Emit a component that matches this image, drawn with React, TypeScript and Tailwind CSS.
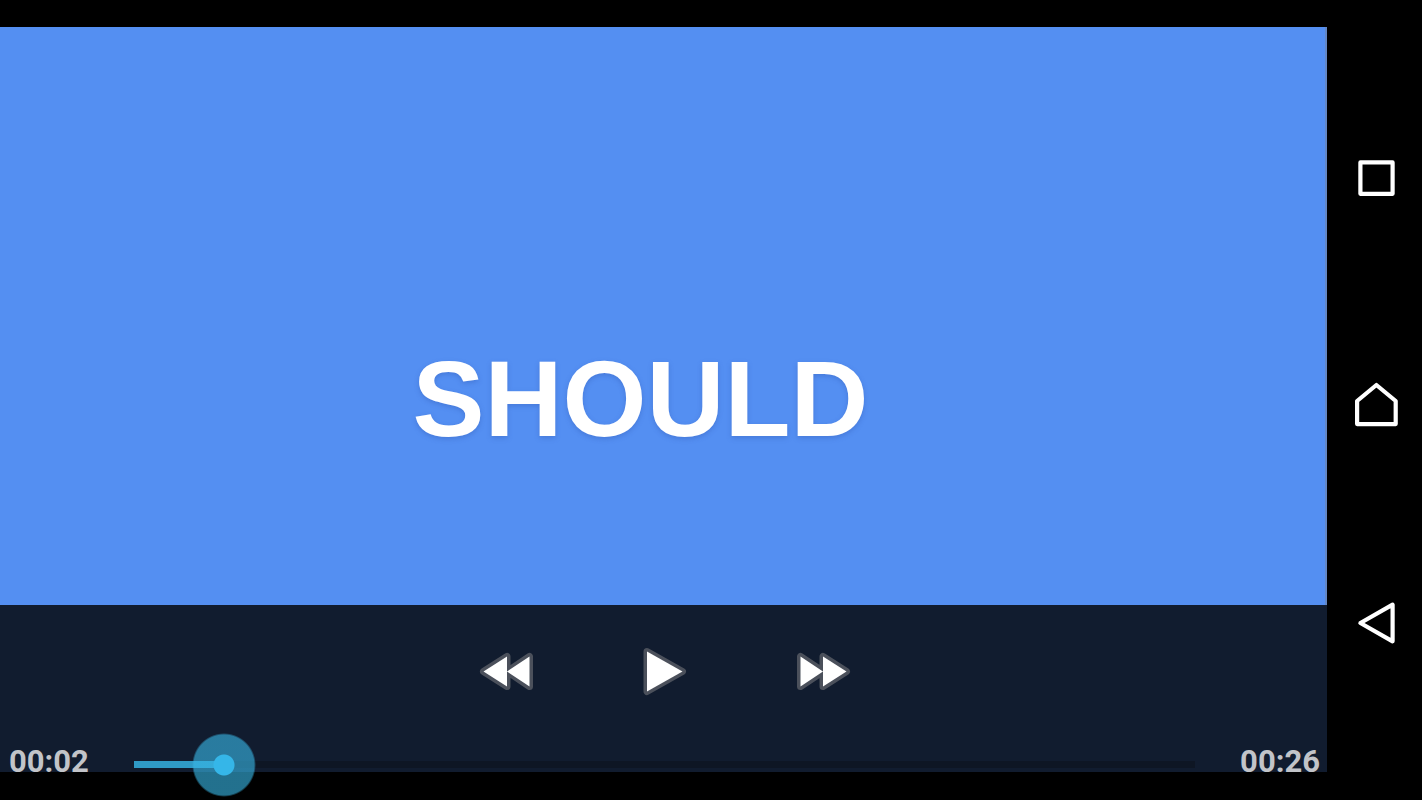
import { useState } from 'react';

const DURATION = 26;

const formatTime = (seconds: number) => {
  const total = Math.floor(seconds);
  const min = String(Math.floor(total / 60)).padStart(2, '0');
  const sec = String(total % 60).padStart(2, '0');
  return `${min}:${sec}`;
};

interface IconButtonProps {
  label: string;
  onClick?: () => void;
  children: React.ReactNode;
}

function IconButton({ label, onClick, children }: IconButtonProps) {
  return (
    <button type="button" aria-label={label} onClick={onClick} className="block size-16 shrink-0">
      {children}
    </button>
  );
}

// white shape with a soft grey rim around it
function MediaIcon({ d }: { d: string }) {
  return (
    <svg viewBox="0 0 64 64" className="size-16" aria-hidden="true">
      <path d={d} fill="#4b505b" stroke="#4b505b" strokeWidth="7" strokeLinejoin="round" />
      <path d={d} fill="#fff" />
    </svg>
  );
}

function NavIcon({ d }: { d: string }) {
  return (
    <svg viewBox="0 0 64 64" className="size-16" aria-hidden="true">
      <path d={d} fill="none" stroke="#fff" strokeWidth="4.2" strokeLinejoin="round" />
    </svg>
  );
}

export default function App() {
  const [position, setPosition] = useState<number>(2.2);

  const seek = (delta: number) => {
    setPosition((p) => Math.min(DURATION, Math.max(0, p + delta)));
  };

  const played = (position / DURATION) * 100;

  return (
    <div className="flex min-h-screen bg-black font-[Roboto,sans-serif]">
      <main className="flex min-w-0 flex-1 flex-col pt-[27px] pb-7">
        <section className="flex flex-1 items-center justify-center border-r-2 border-[#6386c4] bg-[#548ff2] pt-[166px] pr-[44px]">
          <h1 className="font-['Liberation_Sans',Arial,sans-serif] text-[108px] leading-none font-bold text-white [text-shadow:0_2px_5px_rgba(50,90,180,0.4)]">
            SHOULD
          </h1>
        </section>

        <section className="h-[167px] bg-[#111c2f]">
          <div className="flex h-32 items-center justify-center gap-[94px] pt-1 pl-[2px]">
            <IconButton label="Rewind" onClick={() => seek(-5)}>
              <MediaIcon d="M8.5 32.5L32 17.5V47.5ZM32 32.5L54.5 17.5V47.5Z" />
            </IconButton>
            <IconButton label="Play">
              <MediaIcon d="M14 12.5L49.5 32.5L14 52.5Z" />
            </IconButton>
            <IconButton label="Fast forward" onClick={() => seek(5)}>
              <MediaIcon d="M9.5 17.5V47.5L32 32.5ZM32 17.5V47.5L55.5 32.5Z" />
            </IconButton>
          </div>

          <div className="flex h-16 items-center gap-3 pr-[7px] pl-[9px]">
            <label
              htmlFor="seek"
              className="w-[81px] shrink-0 pb-[6px] text-[31px] leading-8 font-bold text-[#c2c4c9]"
            >
              {formatTime(position)}
            </label>
            <input
              id="seek"
              type="range"
              min="0"
              max={DURATION}
              step="0.1"
              value={position}
              onChange={(e) => setPosition(Number(e.target.value))}
              className="h-16 min-w-0 flex-1 appearance-none bg-[length:calc(100%-64px)_7px] bg-[position:center_28px] bg-no-repeat [&::-webkit-slider-thumb]:size-16 [&::-webkit-slider-thumb]:appearance-none [&::-webkit-slider-thumb]:rounded-full [&::-webkit-slider-thumb]:bg-[radial-gradient(circle,#35b6e8_10px,rgba(56,182,229,0.62)_11px,rgba(56,182,229,0.62)_30px,transparent_32px)]"
              style={{
                backgroundImage: `linear-gradient(to right, #2f9ac6 ${played}%, #0e1624 ${played}%)`,
              }}
            />
            <span className="w-[81px] shrink-0 pb-[6px] text-right text-[31px] leading-8 font-bold text-[#c2c4c9]">
              {formatTime(DURATION)}
            </span>
          </div>
        </section>
      </main>

      <nav className="flex w-[95px] flex-col items-center justify-between py-[146px] pl-[3px]">
        <IconButton label="Recent apps">
          <NavIcon d="M16.4 16.4H48.6V47.8H16.4Z" />
        </IconButton>
        <IconButton label="Home">
          <NavIcon d="M32.4 17L51.7 33V56.1H13.1V33Z" />
        </IconButton>
        <IconButton label="Back">
          <NavIcon d="M16.4 33L48.6 14.7V51.3Z" />
        </IconButton>
      </nav>
    </div>
  );
}
